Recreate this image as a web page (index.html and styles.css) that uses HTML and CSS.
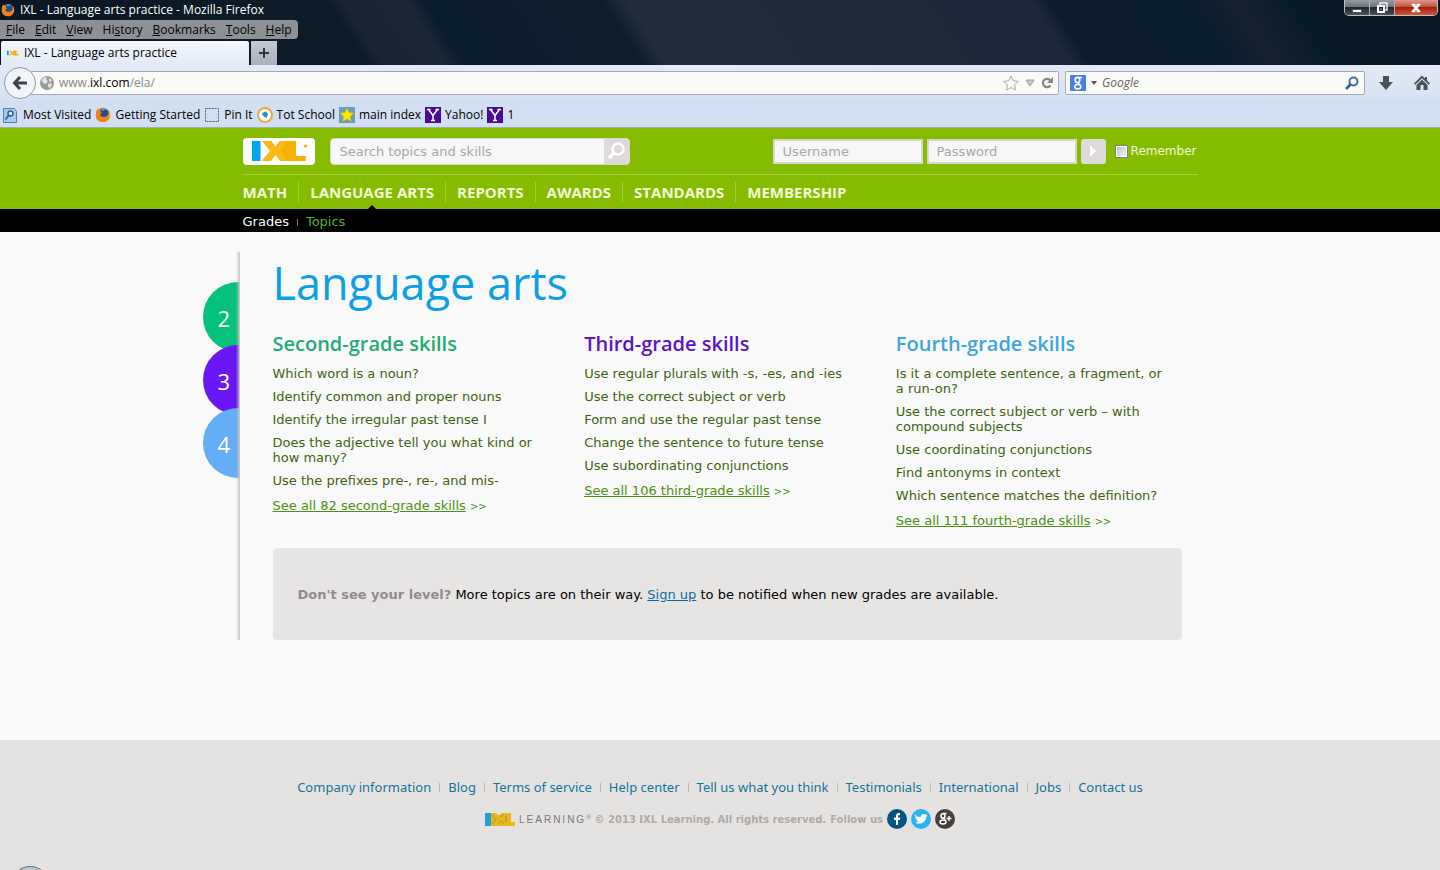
FILE: index.html
```html
<!DOCTYPE html>
<html lang="en">

<head>
    <meta charset="UTF-8">
    <meta name="viewport" content="width=device-width, initial-scale=1.0">
    <title>IXL - Language arts practice</title>
    <link rel="stylesheet" href="styles.css">
</head>

<body>

    <!-- shared icons -->
    <svg class="defs" aria-hidden="true">
        <symbol id="firefox" viewBox="0 0 16 16">
            <circle cx="8" cy="8" r="7" fill="#e66000" />
            <circle cx="8.500" cy="6.500" r="5" fill="#1b4f86" />
            <path d="M6 2.500C8 1 11 1.500 12 3c-2-.5-3 .5-5 .8z" fill="#5fa8d8" />
            <path d="M1 6c0-2 1-3.500 2-4.500l.8 1.500L6 3.200 5.500 5l2 1-2.500 1c0 3 4 4 7 2 1.500-1 2-3 1.500-5.500 2.500 3 2 7-.5 9.500-3 3-8.500 2.500-11-.5C.8 10.500.5 8 1 6z" fill="#f0811c" />
            <path d="M13.500 3.500c1.500 3 1 6-1 8 2-1 3-4 1-8z" fill="#ffd23c" />
        </symbol>
        <symbol id="ixl" viewBox="0 0 56 20">
            <path d="M0 0h8.500v20H0z" fill="#00a6ee" />
            <path d="M10 0h9.500l4 6 4-6H44v15h9.500v5H28l-4.500-6-4.500 6H9.500l8.500-10z" fill="#fdb913" />
            <path d="M35 0h9v15h9.500v5H35l-6-10z" fill="#f5b000" />
            <circle cx="53.500" cy="5" r="1.600" fill="#f7a01e" />
        </symbol>
        <symbol id="yahoo" viewBox="0 0 16 16">
            <path d="M0 0h16v16H0z" fill="#4b0a94" />
            <path d="M3.500 2.500L8 8.500l4.500-6M8 8v6M2 2.500h3.500M10.500 2.500H14M6 13.500h4" fill="none" stroke="#fff" stroke-width="1.500" />
        </symbol>
    </svg>

    <header class="browser">
        <div class="window-top">
            <div class="title-bar">
                <svg class="icon-14"><use href="#firefox" /></svg>
                <span>IXL - Language arts practice - Mozilla Firefox</span>
            </div>
            <div class="window-buttons">
                <button type="button" aria-label="Minimize">
                    <svg width="12" height="12"><path d="M1.500 7.500h9v3h-9z" fill="#fff" stroke="#555" /></svg>
                </button>
                <button type="button" aria-label="Restore">
                    <svg width="12" height="12"><path d="M4 3V1h7v7H9" fill="none" stroke="#eee" stroke-width="1.500" /><path d="M2 4h6v6H2z" fill="none" stroke="#fff" stroke-width="2" /><path d="M4.500 6.500h1v1h-1z" fill="#fff" /></svg>
                </button>
                <button type="button" class="close" aria-label="Close">
                    <svg width="12" height="12"><path d="M3 2.500l6 7M9 2.500l-6 7" stroke="#fff" stroke-width="2.500" /><path d="M1.500 2.500h4M6.500 2.500h4M1.500 9.500h4M6.500 9.500h4" stroke="#fff" stroke-width="1.500" /></svg>
                </button>
            </div>
            <nav class="menu-bar">
                <button type="button"><u>F</u>ile</button>
                <button type="button"><u>E</u>dit</button>
                <button type="button"><u>V</u>iew</button>
                <button type="button">Hi<u>s</u>tory</button>
                <button type="button"><u>B</u>ookmarks</button>
                <button type="button"><u>T</u>ools</button>
                <button type="button"><u>H</u>elp</button>
            </nav>
            <div class="tabs">
                <div class="tab">
                    <svg class="tab-icon"><use href="#ixl" /></svg>
                    <span>IXL - Language arts practice</span>
                </div>
                <button type="button" class="new-tab" aria-label="New tab">
                    <svg width="12" height="12"><path d="M6 1v10M1 6h10" stroke="#333" stroke-width="2" /></svg>
                </button>
            </div>
        </div>

        <div class="nav-bar">
            <button type="button" class="back" aria-label="Back">
                <svg width="18" height="16"><path d="M9 2L3.500 8 9 14M4 8h12" fill="none" stroke="#3d444b" stroke-width="3" /></svg>
            </button>
            <div class="url-box">
                <svg width="14" height="14" viewBox="0 0 14 14"><circle cx="7" cy="7" r="7" fill="#9a9a9a" /><path d="M2 3.500L5 1l2 1-1 2 2 1-2 3-3-1-1-2zM8 8l3-1 1 2-2 3-2-1zM9 2l3 2-1 2-2-1z" fill="#e4e4e4" /></svg>
                <div class="url" role="textbox" aria-label="Address" contenteditable="true">www.<b>ixl.com</b>/ela/</div>
                <svg width="16" height="16" viewBox="0 0 16 16"><path d="M8 1l2.200 4.800 5.200.6-3.900 3.500 1.100 5.200L8 12.500l-4.600 2.600 1.100-5.200L.6 6.400l5.200-.6z" fill="#fafafa" stroke="#aaa" /></svg>
                <svg width="12" height="12"><path d="M2 3h8l-4 6z" fill="#ccc" stroke="#999" /></svg>
                <svg width="12" height="12"><path d="M9.500 8.500a4.200 4.200 0 1 1 0-5" fill="none" stroke="#888" stroke-width="2.200" /><path d="M12 0v6H6z" fill="#888" /></svg>
            </div>
            <div class="search-box">
                <svg width="16" height="16" viewBox="0 0 16 16"><rect width="16" height="16" rx="1" fill="#4a7fe8" /><ellipse cx="7.500" cy="5" rx="2.300" ry="2.600" fill="none" stroke="#fff" stroke-width="1.600" /><ellipse cx="7.800" cy="11.800" rx="3" ry="2.200" fill="none" stroke="#fff" stroke-width="1.500" /><path d="M8 2.500h4M8 7.500l2 2.500" stroke="#fff" stroke-width="1.300" /></svg>
                <svg width="6" height="4"><path d="M0 0h6L3 4z" fill="#555" /></svg>
                <input type="text" placeholder="Google" aria-label="Search with Google">
                <svg width="14" height="14"><circle cx="8.500" cy="5.500" r="4" fill="none" stroke="#3b6ea5" stroke-width="2" /><path d="M5.500 8.500L1 13" stroke="#2d5c92" stroke-width="2.500" /></svg>
            </div>
            <button type="button" class="tool" aria-label="Downloads">
                <svg width="16" height="16"><path d="M5 1h6v6h4l-7 8-7-8h4z" fill="#4b5056" /></svg>
            </button>
            <button type="button" class="tool" aria-label="Home">
                <svg width="16" height="16"><path d="M0 8.500L8 .5l3 3V2h2v3.500l3 3-1.300 1.300L8 3.200 1.300 9.800z" fill="#4b5056" /><path d="M2.500 10L8 4.700l5.500 5.300v5H9.500v-5h-3v5h-4z" fill="#4b5056" /></svg>
            </button>
        </div>

        <nav class="bookmarks">
            <a href="#"><svg width="16" height="16"><path d="M.5 1.500h11l2 3v11H.5z" fill="#a9cbe9" stroke="#4d82b3" /><circle cx="7.500" cy="6.500" r="2.500" fill="#dceefa" stroke="#2f6599" stroke-width="1.500" /><path d="M5.500 8.500l-3 4" stroke="#2f6599" stroke-width="2" /></svg>Most Visited</a>
            <a href="#"><svg width="16" height="16"><use href="#firefox" /></svg>Getting Started</a>
            <a href="#"><svg width="16" height="16"><rect x="1.500" y="1.500" width="13" height="13" fill="none" stroke="#555f70" stroke-dasharray="2 1" /></svg>Pin It</a>
            <a href="#"><svg width="16" height="16"><circle cx="8" cy="8" r="7" fill="#fff" stroke="#efa93a" stroke-width="2" /><path d="M5 6l4-1.500 2 2.500-1.500 4L6 9z" fill="#2391c9" /></svg>Tot School</a>
            <a href="#"><svg width="16" height="16"><path d="M0 0h16v16H0z" fill="#6a9cc0" /><path d="M8 1l2 4.500 5 .5-3.700 3.400 1 5L8 12l-4.300 2.400 1-5L1 6l5-.5z" fill="#ffe800" stroke="#c8b400" stroke-width=".5" /></svg>main index</a>
            <a href="#"><svg width="16" height="16"><use href="#yahoo" /></svg>Yahoo!</a>
            <a href="#"><svg width="16" height="16"><use href="#yahoo" /></svg>1</a>
        </nav>
    </header>

    <div class="site-header">
        <div class="wrap">
            <div class="top-row">
                <a href="#" class="logo" aria-label="IXL"><svg width="56" height="20"><use href="#ixl" /></svg></a>
                <form class="site-search">
                    <input type="text" placeholder="Search topics and skills" aria-label="Search topics and skills">
                    <button type="button" aria-label="Search">
                        <svg width="20" height="20"><circle cx="12" cy="8" r="5.500" fill="none" stroke="#fff" stroke-width="2.500" /><path d="M8 12l-5 5" stroke="#fff" stroke-width="3.500" /></svg>
                    </button>
                </form>
                <form class="login">
                    <input type="text" class="field" placeholder="Username" aria-label="Username">
                    <input type="password" class="field" placeholder="Password" aria-label="Password">
                    <button type="button" aria-label="Sign in"><svg width="8" height="12"><path d="M1 0l6 6-6 6z" fill="#fff" /></svg></button>
                    <input type="checkbox" id="remember">
                    <label for="remember">Remember</label>
                </form>
            </div>
            <nav class="main-nav">
                <a href="#">MATH</a>
                <a href="#" class="active">LANGUAGE ARTS</a>
                <a href="#">REPORTS</a>
                <a href="#">AWARDS</a>
                <a href="#">STANDARDS</a>
                <a href="#">MEMBERSHIP</a>
            </nav>
        </div>
    </div>
    <div class="sub-nav">
        <nav class="wrap">
            <a href="#" class="current">Grades</a>
            <a href="#">Topics</a>
        </nav>
    </div>

    <main class="page">
        <nav class="grade-tabs">
            <a href="#" class="grade second">2</a>
            <a href="#" class="grade third">3</a>
            <a href="#" class="grade fourth">4</a>
        </nav>
        <div class="content">
            <h1>Language arts</h1>
            <div class="columns">
                <section>
                    <h2 class="h-second">Second-grade skills</h2>
                    <ul>
                        <li><a href="#">Which word is a noun?</a></li>
                        <li><a href="#">Identify common and proper nouns</a></li>
                        <li><a href="#">Identify the irregular past tense I</a></li>
                        <li><a href="#">Does the adjective tell you what kind or how many?</a></li>
                        <li><a href="#">Use the prefixes pre-, re-, and mis-</a></li>
                    </ul>
                    <p class="see-all"><a href="#">See all 82 second-grade skills</a> <small>&gt;&gt;</small></p>
                </section>
                <section>
                    <h2 class="h-third">Third-grade skills</h2>
                    <ul>
                        <li><a href="#">Use regular plurals with -s, -es, and -ies</a></li>
                        <li><a href="#">Use the correct subject or verb</a></li>
                        <li><a href="#">Form and use the regular past tense</a></li>
                        <li><a href="#">Change the sentence to future tense</a></li>
                        <li><a href="#">Use subordinating conjunctions</a></li>
                    </ul>
                    <p class="see-all"><a href="#">See all 106 third-grade skills</a> <small>&gt;&gt;</small></p>
                </section>
                <section>
                    <h2 class="h-fourth">Fourth-grade skills</h2>
                    <ul>
                        <li><a href="#">Is it a complete sentence, a fragment, or a&nbsp;run-on?</a></li>
                        <li><a href="#">Use the correct subject or verb – with compound subjects</a></li>
                        <li><a href="#">Use coordinating conjunctions</a></li>
                        <li><a href="#">Find antonyms in context</a></li>
                        <li><a href="#">Which sentence matches the definition?</a></li>
                    </ul>
                    <p class="see-all"><a href="#">See all 111 fourth-grade skills</a> <small>&gt;&gt;</small></p>
                </section>
            </div>
            <p class="notice"><b>Don't see your level?</b> More topics are on their way. <a href="#">Sign up</a> to be notified when new grades are available.</p>
        </div>
    </main>

    <footer class="site-footer">
        <nav class="footer-links">
            <a href="#">Company information</a>
            <a href="#">Blog</a>
            <a href="#">Terms of service</a>
            <a href="#">Help center</a>
            <a href="#">Tell us what you think</a>
            <a href="#">Testimonials</a>
            <a href="#">International</a>
            <a href="#">Jobs</a>
            <a href="#">Contact us</a>
        </nav>
        <div class="legal">
            <svg class="footer-logo" viewBox="0 0 30 13"><path d="M0 0h6v13H0z" fill="#1f9fd8" /><path d="M6 0h5l3 3 3-3h9v9h5v4H6z" fill="#e8b51a" /><path d="M7 2l4 4.500L7 11M13 11l3-3 3 3M14 2l2 2 3-3M21 3v6" fill="none" stroke="#a8963a" /></svg>
            <span class="learning">LEARNING<sup>®</sup></span>
            <span class="copyright">© 2013 IXL Learning. All rights reserved.</span>
            <span class="follow">Follow us</span>
            <a href="#" aria-label="Facebook"><svg width="20" height="20"><circle cx="10" cy="10" r="10" fill="#00557f" /><path d="M9 16v-5H7V8.500h2V7c0-2 1-3 2.800-3H13v2.300h-1c-.8 0-1 .3-1 1v1.200h2.200L13 11h-2v5z" fill="#fff" /></svg></a>
            <a href="#" aria-label="Twitter"><svg width="20" height="20"><circle cx="10" cy="10" r="10" fill="#28b4ee" /><path d="M4 5.500c1.500 1.800 3.500 2.600 5.700 2.700-.4-3 3-4.300 4.800-2.400l1.700-.6-1 1.600 1.300-.3-1.300 1.500c0 5-5.500 8.500-11 5.700 1.500 0 2.700-.4 3.500-1.100-1.200-.2-2-.9-2.300-1.900h1.200C5 10.200 4.200 9.200 4.200 7.900l1.100.3C4 7.300 3.600 6.500 4 5.500z" fill="#fff" /></svg></a>
            <a href="#" aria-label="Google Plus"><svg width="20" height="20"><circle cx="10" cy="10" r="10" fill="#46403d" /><ellipse cx="8" cy="7" rx="2" ry="2.200" fill="none" stroke="#fff" stroke-width="1.500" /><ellipse cx="8" cy="13" rx="3" ry="2" fill="none" stroke="#fff" stroke-width="1.500" /><path d="M8 4.500h3.500M8.500 9l1.800 2M14 7v5M11.500 9.500h5" stroke="#fff" stroke-width="1.400" /></svg></a>
        </div>
        <span class="status-orb"></span>
    </footer>

</body>

</html>
```
FILE: styles.css
```css
* {
    box-sizing: border-box;
}

body {
    margin: 0;
    min-height: 100vh;
    display: flex;
    flex-direction: column;
    background: #f9f9f9;
    color: #000;
    font: 13px/15px Verdana, "DejaVu Sans", sans-serif;
}

svg {
    display: block;
    flex: none;
}

a {
    text-decoration: none;
}

button {
    padding: 0;
    border: 0;
    background: none;
    font: inherit;
    color: inherit;
}

input {
    min-width: 0;
    font: inherit;
}

.defs {
    position: absolute;
    width: 0;
    height: 0;
}

/* browser window */
.browser {
    font: 12px/16px "Segoe UI", "Open Sans", sans-serif;
    border-bottom: 1px solid #9fb4a8;
}

.window-top {
    position: relative;
    background: linear-gradient(57deg, #0b1623 0, #0d1b28 310px, #182530 322px, #1a2733 375px, #0a1b2c 390px, #0e1d29 540px, #222d3b 560px, #1c2737 900px, #0b1b29 915px, #0b1c2a 1040px, #15212d 1070px, #0a1b28 1110px, #0a1825 100%);
}

.title-bar {
    display: flex;
    align-items: center;
    gap: 5px;
    height: 20px;
    padding-left: 1px;
    color: #fff;
}

.icon-14 {
    width: 14px;
    height: 14px;
}

.window-buttons {
    position: absolute;
    top: 0;
    right: 2px;
    display: flex;
    border: 1px solid #b9bfc6;
    border-top: 0;
    border-radius: 0 0 5px 5px;
    overflow: hidden;
}

.window-buttons button {
    display: flex;
    align-items: center;
    justify-content: center;
    width: 25px;
    height: 15px;
    border-right: 1px solid #aab0b7;
    background: linear-gradient(#969ba1 0, #70767d 45%, #1c242d 50%, #4d5660 100%);
}

.window-buttons .close {
    width: 42px;
    border-right: 0;
    background: linear-gradient(#d99a8c 0, #c4523d 45%, #a51f08 50%, #d0563a 100%);
}

.menu-bar {
    display: flex;
    gap: 10px;
    width: max-content;
    height: 19px;
    padding: 1px 6px;
    background: #8d9094;
    border-radius: 0 4px 4px 0;
    color: #000;
}

.tabs {
    display: flex;
    gap: 2px;
    padding: 2px 0 0 1px;
}

.tab {
    display: flex;
    align-items: center;
    gap: 5px;
    width: 248px;
    height: 24px;
    padding-left: 6px;
    background: linear-gradient(#f4f7fc, #e2eaf6);
    border-radius: 2px 2px 0 0;
}

.tab-icon {
    width: 12px;
    height: 6px;
}

.new-tab {
    display: flex;
    align-items: center;
    justify-content: center;
    width: 26px;
    background: linear-gradient(#c3c9d2, #a9b0bb);
}

.nav-bar {
    display: flex;
    align-items: center;
    height: 36px;
    padding: 0 10px 0 4px;
    background: linear-gradient(#e4ebf6, #d5e1f3);
}

.back {
    position: relative;
    display: flex;
    align-items: center;
    justify-content: center;
    width: 32px;
    height: 32px;
    border: 1px solid #8f98a6;
    border-radius: 50%;
    background: #f1f5fa;
}

.url-box,
.search-box {
    display: flex;
    align-items: center;
    height: 24px;
    border: 1px solid #a2a9b8;
    background: #fafaf8;
}

.url-box {
    flex: 1;
    gap: 5px;
    margin: 0 6px 0 -5px;
    padding: 0 5px 0 8px;
    border-radius: 0 2px 2px 0;
}

.url {
    flex: 1;
    color: #888;
}

.url b {
    font-weight: normal;
    color: #000;
}

.search-box {
    gap: 5px;
    width: 300px;
    margin-right: 13px;
    padding: 0 5px 0 4px;
    border-radius: 2px;
}

.search-box input {
    flex: 1;
    padding: 0;
    border: 0;
    background: none;
    outline: 0;
    font-style: italic;
}

.search-box input::placeholder {
    color: #666;
}

.tool + .tool {
    margin-left: 20px;
}

.bookmarks {
    display: flex;
    gap: 4px;
    height: 26px;
    padding: 1px 0 0 3px;
    background: #d2dff2;
}

.bookmarks a {
    display: flex;
    align-items: center;
    gap: 4px;
    color: #000;
}

/* site header */
.wrap {
    max-width: 955px;
    width: 100%;
    margin: 0 auto;
}

.site-header {
    background: #86bc00;
}

.top-row {
    display: flex;
    align-items: center;
    height: 47px;
    border-bottom: 1px solid #a0cf3a;
}

.logo {
    display: flex;
    align-items: center;
    padding: 0 7px 0 9px;
    height: 27px;
    background: #fff;
    border-radius: 4px;
}

.site-search {
    display: flex;
    width: 300px;
    height: 27px;
    margin-left: 15px;
    border: 1px solid #d6dcc9;
    border-radius: 4px;
    overflow: hidden;
    background: #f8f7f7;
}

.site-search input {
    flex: 1;
    padding: 0 9px;
    border: 0;
    background: none;
}

.site-search button {
    display: flex;
    align-items: center;
    justify-content: center;
    width: 25px;
    background: #dedada;
}

.site-header input::placeholder {
    color: #a9a6a6;
}

.login {
    display: flex;
    align-items: center;
    margin-left: auto;
    padding-right: 1px;
    color: #f2fbd0;
}

.login label {
    font-size: 12px;
}

.login .field {
    width: 150px;
    height: 25px;
    margin-right: 4px;
    padding: 0 8px;
    border: 2px solid #d5d8cf;
    background: #f8f7f7;
}

.login button {
    display: flex;
    align-items: center;
    justify-content: center;
    width: 25px;
    height: 25px;
    border-radius: 3px;
    background: #dedada;
}

.login input[type="checkbox"] {
    appearance: none;
    width: 11px;
    height: 11px;
    margin: 0 4px 0 10px;
    border: 1px solid #fff;
    outline: 1px solid #7b8577;
    background: linear-gradient(135deg, #bfc0c4, #f3f3f3);
}

.main-nav {
    display: flex;
    align-items: center;
    height: 34px;
    font: bold 15px/20px "Trebuchet MS", "Open Sans", sans-serif;
}

.main-nav a {
    position: relative;
    padding: 0 11px;
    border-right: 1px solid #a0cf3a;
    color: #f4fbd8;
}

.main-nav a:first-child {
    padding-left: 0;
}

.main-nav a:last-child {
    border-right: 0;
}

.main-nav .active::after {
    content: "";
    position: absolute;
    left: 50%;
    bottom: -8px;
    margin-left: -5px;
    border: 5px solid transparent;
    border-top: 0;
    border-bottom-color: #000;
}

.sub-nav {
    background: #000;
}

.sub-nav .wrap {
    display: flex;
    height: 23px;
    padding-top: 5px;
}

.sub-nav a {
    color: #5cb02e;
}

.sub-nav .current {
    color: #fff;
}

.sub-nav .current::after {
    content: "";
    display: inline-block;
    width: 1px;
    height: 7px;
    margin: 0 8px;
    background: #777;
}

/* page body */
.page {
    display: flex;
    flex: 1;
    align-items: flex-start;
    width: 100%;
    max-width: 1035px;
    margin: 0 auto;
    padding: 20px 0;
}

.grade-tabs {
    padding-top: 30px;
}

.grade {
    display: flex;
    align-items: center;
    width: 36px;
    height: 70px;
    margin-bottom: -7px;
    padding: 2px 0 0 15px;
    border-radius: 35px 0 0 35px;
    color: #fff;
    font: 22px/26px "Trebuchet MS", "Open Sans", sans-serif;
}

.second {
    background: #04c17b;
}

.third {
    background: #6a17f7;
}

.fourth {
    background: #64adf7;
}

.content {
    position: relative;
    flex: 1;
    margin-left: -3px;
    padding: 4px 56px 0 37px;
    background: linear-gradient(to right, transparent, #c4c2c0) no-repeat 0 0 / 4px 100%;
}

h1 {
    margin: 0 0 22px;
    color: #0c9fe4;
    font: 45px/54px "Trebuchet MS", "Open Sans", sans-serif;
}

.columns {
    display: grid;
    grid-template-columns: repeat(3, 1fr);
    gap: 26px;
}

h2 {
    margin: 0 0 10px;
    font: 600 20px/24px "Trebuchet MS", "Open Sans", sans-serif;
}

.h-second {
    color: #23ab72;
}

.h-third {
    color: #5b14c4;
}

.h-fourth {
    color: #3ea5dc;
}

ul {
    margin: 0;
    padding: 0;
    list-style: none;
}

li {
    margin-bottom: 8px;
}

li a {
    color: #3f6212;
}

.see-all {
    margin: 10px 0 0;
    color: #4b9010;
}

.see-all a {
    color: #4b9010;
    text-decoration: underline;
}

.see-all small {
    font-size: 10px;
}

.notice {
    margin: 19px 0 0;
    padding: 39px 25px 38px;
    background: #e7e5e4;
    border-radius: 4px;
}

.notice b {
    color: #918a8f;
}

.notice a {
    color: #0c6b9e;
    text-decoration: underline;
}

/* footer */
.site-footer {
    position: relative;
    height: 130px;
    padding-top: 40px;
    background: #e5e3e1;
    overflow: hidden;
}

.footer-links {
    display: flex;
    justify-content: center;
    font-family: Verdana, "Noto Sans", sans-serif;
}

.footer-links a {
    color: #14739c;
}

.footer-links a + a::before {
    content: "";
    display: inline-block;
    width: 1px;
    height: 9px;
    margin: 0 8px;
    background: #bbb;
}

.legal {
    display: flex;
    align-items: center;
    justify-content: center;
    gap: 4px;
    margin-top: 14px;
    color: #aeaaa8;
    font-size: 10px;
    font-weight: bold;
}

.footer-logo {
    width: 30px;
    height: 13px;
}

.learning {
    color: #777;
    font: 10px/15px Arial, "Liberation Sans", sans-serif;
    letter-spacing: 2px;
}

.learning sup {
    font-size: 6px;
    line-height: 6px;
    letter-spacing: 0;
}

.status-orb {
    position: absolute;
    left: 10px;
    bottom: -36px;
    width: 40px;
    height: 40px;
    border: 1px solid #5f7380;
    border-radius: 50%;
    background: #b9c8d3;
}
```
